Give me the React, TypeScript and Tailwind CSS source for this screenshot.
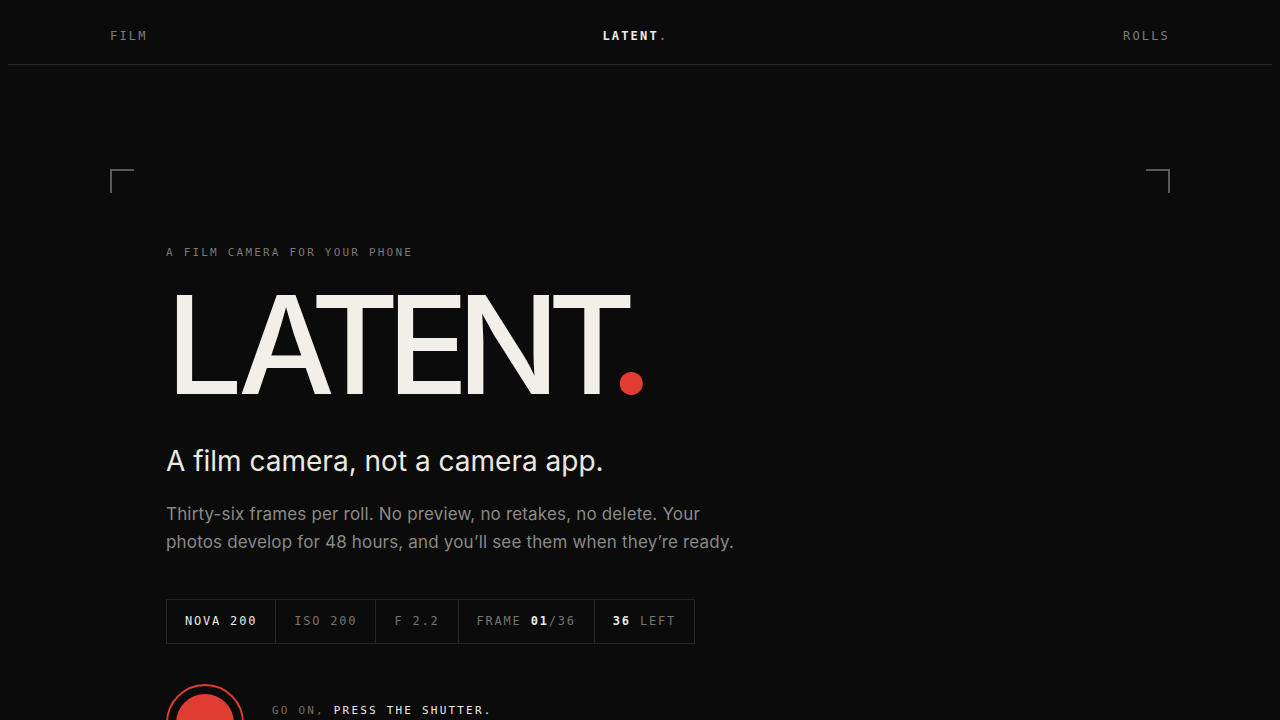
import React from "react";

const mono = "font-['DejaVu_Sans_Mono',monospace]";
const sans = "font-['Inter',sans-serif]";

function Corner({ side }: { side: "left" | "right" }) {
  return (
    <span
      className={
        side === "left"
          ? "absolute left-0 top-0 h-6 w-6 border-l-2 border-t-2 border-[#5a5a58]"
          : "absolute right-0 top-0 h-6 w-6 border-r-2 border-t-2 border-[#5a5a58]"
      }
    />
  );
}

function Spec({ children, first }: { children: React.ReactNode; first?: boolean }) {
  return (
    <div
      className={
        "flex h-full items-center px-[18px] " + (first ? "" : "border-l border-[#262626]")
      }
    >
      {children}
    </div>
  );
}

export default function App() {
  return (
    <div className={`min-h-[720px] w-full overflow-hidden bg-[#0b0b0b] ${sans}`}>
      <header className="mx-2 flex h-[65px] items-start justify-between border-b border-[#2a2a2a] px-[102px] pt-[27px]">
        <span className={`${mono} text-[12px] leading-[18px] tracking-[0.18em] text-[#7d7d7a]`}>FILM</span>
        <span className={`${mono} text-[12px] font-bold leading-[18px] tracking-[0.18em] text-[#f0ede6]`}>
          LATENT<span className="text-[#e03c31]">.</span>
        </span>
        <span className={`${mono} text-[12px] leading-[18px] tracking-[0.18em] text-[#7d7d7a]`}>ROLLS</span>
      </header>

      <main className="mx-auto mt-[104px] w-[1060px]">
        <section className="relative px-14 pt-[76px]">
          <Corner side="left" />
          <Corner side="right" />

          <p className={`${mono} text-[11px] leading-4 tracking-[0.2em] text-[#7a7a77]`}>
            A FILM CAMERA FOR YOUR PHONE
          </p>

          <h1 className="mt-4 text-[136px] font-medium leading-none tracking-[-0.09em] text-[#f2efe8]">
            <span className="tracking-[-0.035em]">L</span>ATENT
            <span className="ml-[-17px] text-[160px] leading-[0] text-[#e03c31]">.</span>
          </h1>

          <h2 className="mt-[32px] text-[28px] leading-[1.2] text-[#ece9e2]">
            A film camera, not a camera app.
          </h2>

          <p className="mt-[21px] text-[17px] leading-7 tracking-[0.01em] text-[#8a8a86]">
            Thirty-six frames per roll. No preview, no retakes, no delete. Your
            <br />
            photos develop for 48 hours, and you’ll see them when they’re ready.
          </p>

          <div
            className={`${mono} mt-[43px] inline-flex h-[45px] items-center border border-[#262626] text-[12px] tracking-[0.15em] text-[#757572]`}
          >
            <Spec first>
              <span className="text-[#ece9e2]">NOVA 200</span>
            </Spec>
            <Spec>ISO 200</Spec>
            <Spec>F 2.2</Spec>
            <Spec>
              FRAME&nbsp;<span className="font-bold text-[#ece9e2]">01</span>/36
            </Spec>
            <Spec>
              <span className="font-bold text-[#ece9e2]">36</span>&nbsp;LEFT
            </Spec>
          </div>

          <div className="mt-[40px] flex items-start gap-7">
            <button className="flex h-[78px] w-[78px] shrink-0 items-center justify-center rounded-full border-2 border-[#e03c31]">
              <span className="h-[58px] w-[58px] rounded-full bg-[#e03c31]" />
            </button>
            <p className={`${mono} mt-[19px] text-[11px] leading-4 tracking-[0.2em] text-[#6f6f6c]`}>
              GO ON, <span className="text-[#ece9e2]">PRESS THE SHUTTER.</span>
            </p>
          </div>
        </section>
      </main>
    </div>
  );
}
